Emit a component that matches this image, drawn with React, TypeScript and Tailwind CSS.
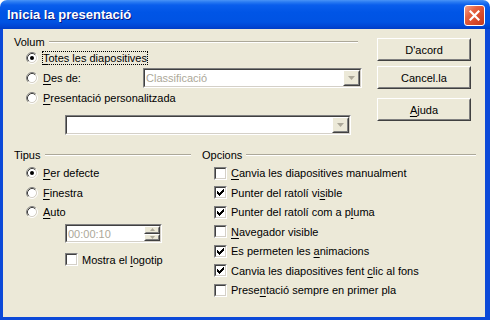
import React from "react";

function Radio({ checked }: { checked?: boolean }) {
  return (
    <svg width="12" height="12" viewBox="0 0 12 12" className="shrink-0">
      <circle cx="6" cy="6" r="4.2" fill="#fff" />
      <path d="M2.11 9.89A5.5 5.5 0 0 1 9.89 2.11" stroke="#808080" fill="none" />
      <path d="M9.89 2.11A5.5 5.5 0 0 1 2.11 9.89" stroke="#fff" fill="none" />
      <path d="M2.82 9.18A4.5 4.5 0 0 1 9.18 2.82" stroke="#404040" fill="none" />
      <path d="M9.18 2.82A4.5 4.5 0 0 1 2.82 9.18" stroke="#D4D0C8" fill="none" />
      {checked && <circle cx="6" cy="6" r="2" fill="#000" />}
    </svg>
  );
}

function Check({ checked }: { checked?: boolean }) {
  return (
    <span className="w-[13px] h-[13px] shrink-0 flex border border-t-[#808080] border-l-[#808080] border-b-white border-r-white">
      <span className="flex-1 flex items-center justify-center border border-t-[#404040] border-l-[#404040] border-b-[#D4D0C8] border-r-[#D4D0C8] bg-white">
        {checked && (
          <svg width="7" height="7" viewBox="0 0 7 7">
            <path
              d="M0 2h1v3H0zM1 3h1v3H1zM2 4h1v3H2zM3 3h1v3H3zM4 2h1v3H4zM5 1h1v3H5zM6 0h1v3H6z"
              fill="#000"
            />
          </svg>
        )}
      </span>
    </span>
  );
}

function Btn({ children, className }: { children?: React.ReactNode; className: string }) {
  return (
    <div
      className={`flex border border-t-white border-l-white border-b-[#404040] border-r-[#404040] ${className}`}
    >
      <div className="flex-1 flex items-center justify-center border border-t-[#ECE9D8] border-l-[#ECE9D8] border-b-[#808080] border-r-[#808080] bg-[#ECE9D8]">
        {children}
      </div>
    </div>
  );
}

function Arrow({ up }: { up?: boolean }) {
  return up ? (
    <svg width="5" height="3" viewBox="0 0 5 3">
      <path d="M0 3h5L2.5 0z" fill="#ACA899" />
    </svg>
  ) : (
    <svg width="5" height="3" viewBox="0 0 5 3">
      <path d="M0 0h5L2.5 3z" fill="#ACA899" />
    </svg>
  );
}

function Combo({ className, text }: { className: string; text?: string }) {
  return (
    <div
      className={`flex border border-t-[#808080] border-l-[#808080] border-b-white border-r-white ${className}`}
    >
      <div className="flex-1 flex border border-t-[#404040] border-l-[#404040] border-b-[#D4D0C8] border-r-[#D4D0C8] bg-white">
        <div className="flex-1 flex items-center pl-[1px] text-[#ACA899]">{text}</div>
        <Btn className="w-[17px]">
          <svg width="7" height="4" viewBox="0 0 7 4">
            <path d="M0 0h7L3.5 4z" fill="#ACA899" />
          </svg>
        </Btn>
      </div>
    </div>
  );
}

function Header({ label }: { label: string }) {
  return (
    <div className="h-[14px] flex items-center">
      <span>{label}</span>
      <div className="flex-1 ml-[4px] h-[2px] border-t border-t-[#ACA899] border-b border-b-white" />
    </div>
  );
}

function U({ children }: { children: React.ReactNode }) {
  return <span className="underline underline-offset-[2px]">{children}</span>;
}

function CheckRow({ checked, h, children }: { checked?: boolean; h: string; children: React.ReactNode }) {
  return (
    <div className={`flex items-center pl-[12px] ${h}`}>
      <Check checked={checked} />
      <span className="ml-[4px] whitespace-nowrap">{children}</span>
    </div>
  );
}

export default function App() {
  return (
    <div className="w-[490px] h-[320px] bg-white font-['Liberation_Sans',Arial,sans-serif] text-[11px] leading-[14px] text-black">
      <div className="w-full h-full flex flex-col rounded-t-[7px] overflow-hidden">
        <div className="h-[29px] shrink-0 flex items-start bg-[linear-gradient(to_bottom,#4A94F7_0px,#2A7BF2_2px,#0A5EEC_5px,#0055E6_12px,#0053E3_22px,#0047D6_26px,#003DC6_29px)]">
          <div className="pl-[7px] pt-[7px] font-bold text-[13px] leading-[16px] text-white [text-shadow:1px_1px_0_#0A1883]">
            Inicia la presentació
          </div>
          <div className="ml-auto mt-[5px] mr-[5px] w-[21px] h-[21px] rounded-[3px] border border-white bg-[linear-gradient(135deg,#F4A08A_0%,#E5613F_35%,#D6482A_70%,#C23A1C_100%)] flex items-center justify-center">
            <svg width="11" height="11" viewBox="0 0 11 11">
              <path d="M1.5 1.5l8 8M9.5 1.5l-8 8" stroke="#fff" strokeWidth="2.2" strokeLinecap="square" />
            </svg>
          </div>
        </div>

        <div className="flex-1 flex flex-col bg-[#ECE9D8] border-l-[3px] border-r-[5px] border-b-[3px] border-[#0B49D8]">
          <div className="flex pl-[11px]">
            <div className="w-[348px] flex flex-col pt-[6px]">
              <div className="mr-[4px]">
                <Header label="Volum" />
              </div>
              <div className="h-[18px] flex items-center pl-[12px]">
                <Radio checked />
                <span className="ml-[4px] border border-dotted border-black leading-[12px]">
                  <U>T</U>otes les diapositives
                </span>
              </div>
              <div className="h-[22px] flex items-center pl-[12px]">
                <Radio />
                <span className="ml-[5px] w-[100px]">
                  <U>D</U>es de:
                </span>
                <Combo className="flex-1 h-[20px]" text="Classificació" />
              </div>
              <div className="h-[18px] flex items-center pl-[12px]">
                <Radio />
                <span className="ml-[5px]">
                  <U>P</U>resentació personalitzada
                </span>
              </div>
              <Combo className="ml-[51px] mt-[8px] w-[286px] h-[20px]" />
            </div>
            <div className="ml-[15px] w-[94px] flex flex-col pt-[9px]">
              <Btn className="h-[23px]">D'acord</Btn>
              <Btn className="h-[23px] mt-[5px]">Cancel.la</Btn>
              <Btn className="h-[23px] mt-[9px]">
                <span>
                  <U>A</U>juda
                </span>
              </Btn>
            </div>
          </div>

          <div className="flex pl-[11px] mt-[13px]">
            <div className="w-[177px] flex flex-col">
              <Header label="Tipus" />
              <div className="mt-[1px] h-[20px] flex items-center pl-[12px]">
                <Radio checked />
                <span className="ml-[5px]">
                  <U>P</U>er defecte
                </span>
              </div>
              <div className="h-[19px] flex items-center pl-[12px]">
                <Radio />
                <span className="ml-[5px]">
                  <U>F</U>inestra
                </span>
              </div>
              <div className="h-[20px] flex items-center pl-[12px]">
                <Radio />
                <span className="ml-[5px]">
                  <U>A</U>uto
                </span>
              </div>
              <div className="ml-[51px] mt-[2px] w-[97px] h-[19px] flex border border-t-[#808080] border-l-[#808080] border-b-white border-r-white">
                <div className="flex-1 flex border border-t-[#404040] border-l-[#404040] border-b-[#D4D0C8] border-r-[#D4D0C8] bg-white">
                  <div className="flex-1 flex items-center pl-[1px] text-[#ACA899]">00:00:10</div>
                  <div className="w-[16px] flex flex-col">
                    <Btn className="flex-1">
                      <Arrow up />
                    </Btn>
                    <Btn className="flex-1">
                      <Arrow />
                    </Btn>
                  </div>
                </div>
              </div>
              <div className="ml-[51px] mt-[10px] h-[13px] flex items-center">
                <Check />
                <span className="ml-[4px]">
                  Mostra el <U>l</U>ogotip
                </span>
              </div>
            </div>
            <div className="ml-[11px] w-[274px] flex flex-col">
              <Header label="Opcions" />
              <div className="mt-[1px]" />
              <CheckRow h="h-[20px]">
                <U>C</U>anvia les diapositives manualment
              </CheckRow>
              <CheckRow checked h="h-[19px]">
                Punter del ratolí vi<U>s</U>ible
              </CheckRow>
              <CheckRow checked h="h-[20px]">
                Punter del ratolí com a p<U>l</U>uma
              </CheckRow>
              <CheckRow h="h-[19px]">
                <U>N</U>avegador visible
              </CheckRow>
              <CheckRow checked h="h-[20px]">
                Es permeten les <U>a</U>nimacions
              </CheckRow>
              <CheckRow checked h="h-[19px]">
                Canvia les diapositives fent <U>c</U>lic al fons
              </CheckRow>
              <CheckRow h="h-[20px]">
                Prese<U>n</U>tació sempre en primer pla
              </CheckRow>
            </div>
          </div>
        </div>
      </div>
    </div>
  );
}
